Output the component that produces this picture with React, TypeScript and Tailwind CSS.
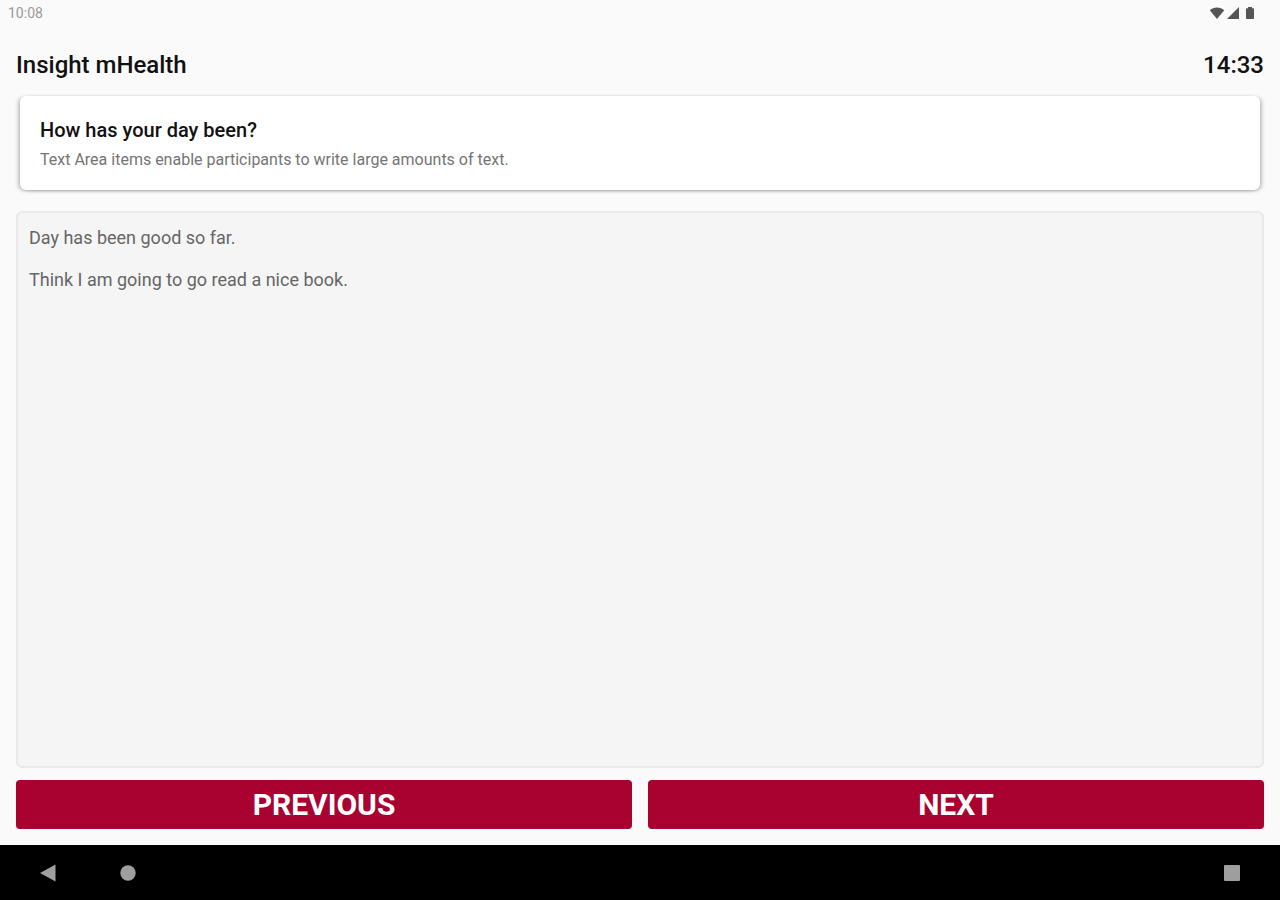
import { useState } from "react"

function StatusBar() {
  return (
    <div className="flex h-[26px] items-center justify-between pl-2 pr-6">
      <span className="text-sm text-[#999999]">10:08</span>
      <div className="flex items-center gap-[2px] text-[#555555]">
        <svg width="16" height="12" viewBox="0 0 16 12" fill="currentColor" aria-hidden="true">
          <path d="M8 12 0.8 3.2C2.8 1.4 5.2 0.5 8 0.5s5.2 0.9 7.2 2.7z" />
        </svg>
        <svg width="12" height="12" viewBox="0 0 12 12" fill="currentColor" aria-hidden="true">
          <path d="M0 12 12 0v12z" />
        </svg>
        <svg className="ml-[3px]" width="12" height="12" viewBox="0 0 12 12" fill="currentColor" aria-hidden="true">
          <path d="M4 0h4v1.2h1.2a.8.8 0 0 1 .8.8v9.2a.8.8 0 0 1-.8.8H2.8a.8.8 0 0 1-.8-.8V2a.8.8 0 0 1 .8-.8H4z" />
        </svg>
      </div>
    </div>
  )
}

function NavBar() {
  return (
    <nav className="flex h-[55px] items-center bg-black px-9 text-[#9e9e9e]">
      <button type="button" aria-label="Back" className="p-1">
        <svg width="16" height="18" viewBox="0 0 16 18" fill="currentColor">
          <path d="M0 9 15.5 0.5v17z" />
        </svg>
      </button>
      <button type="button" aria-label="Home" className="ml-14 p-1">
        <svg width="16" height="16" viewBox="0 0 16 16" fill="currentColor">
          <circle cx="8" cy="8" r="7.7" />
        </svg>
      </button>
      <button type="button" aria-label="Recent apps" className="ml-auto p-1">
        <svg width="16" height="16" viewBox="0 0 16 16" fill="currentColor">
          <rect width="16" height="16" rx="1" />
        </svg>
      </button>
    </nav>
  )
}

export default function App() {
  const [answer, setAnswer] = useState("Day has been good so far.\n\nThink I am going to go read a nice book.")

  return (
    <div className="flex min-h-screen flex-col bg-[#fafafa] font-[Roboto,sans-serif]">
      <StatusBar />
      <header className="flex items-center justify-between px-4 pt-6 pb-4 text-2xl leading-[30px] font-medium text-[#111111]">
        <h1>Insight mHealth</h1>
        <time>14:33</time>
      </header>
      <main className="flex flex-1 flex-col px-4 pb-4">
        <section className="mx-1 rounded-md bg-white px-5 pt-5 pb-[18px] shadow-[0_1px_3px_rgba(0,0,0,0.15),-3px_1px_4px_-1px_rgba(0,0,0,0.2),3px_1px_4px_-1px_rgba(0,0,0,0.2)]">
          <h2 className="text-xl leading-7 font-medium text-[#111111]">
            <label htmlFor="answer">How has your day been?</label>
          </h2>
          <p id="hint" className="mt-1 text-base leading-6 text-[#757575]">
            Text Area items enable participants to write large amounts of text.
          </p>
        </section>
        <textarea
          id="answer"
          aria-describedby="hint"
          className="mt-[21px] w-full flex-1 resize-none rounded-md border-2 border-[#e9e9e9] bg-[#f5f5f5] px-[11px] py-[14px] text-lg leading-[21px] text-[#666666] outline-none"
          value={answer}
          onChange={(e) => setAnswer(e.target.value)}
        />
        <div className="mt-3 grid grid-cols-2 gap-4">
          <button type="button" className="h-[49px] rounded bg-[#a90230] text-3xl font-bold text-white">
            PREVIOUS
          </button>
          <button type="button" className="h-[49px] rounded bg-[#a90230] text-3xl font-bold text-white">
            NEXT
          </button>
        </div>
      </main>
      <NavBar />
    </div>
  )
}
